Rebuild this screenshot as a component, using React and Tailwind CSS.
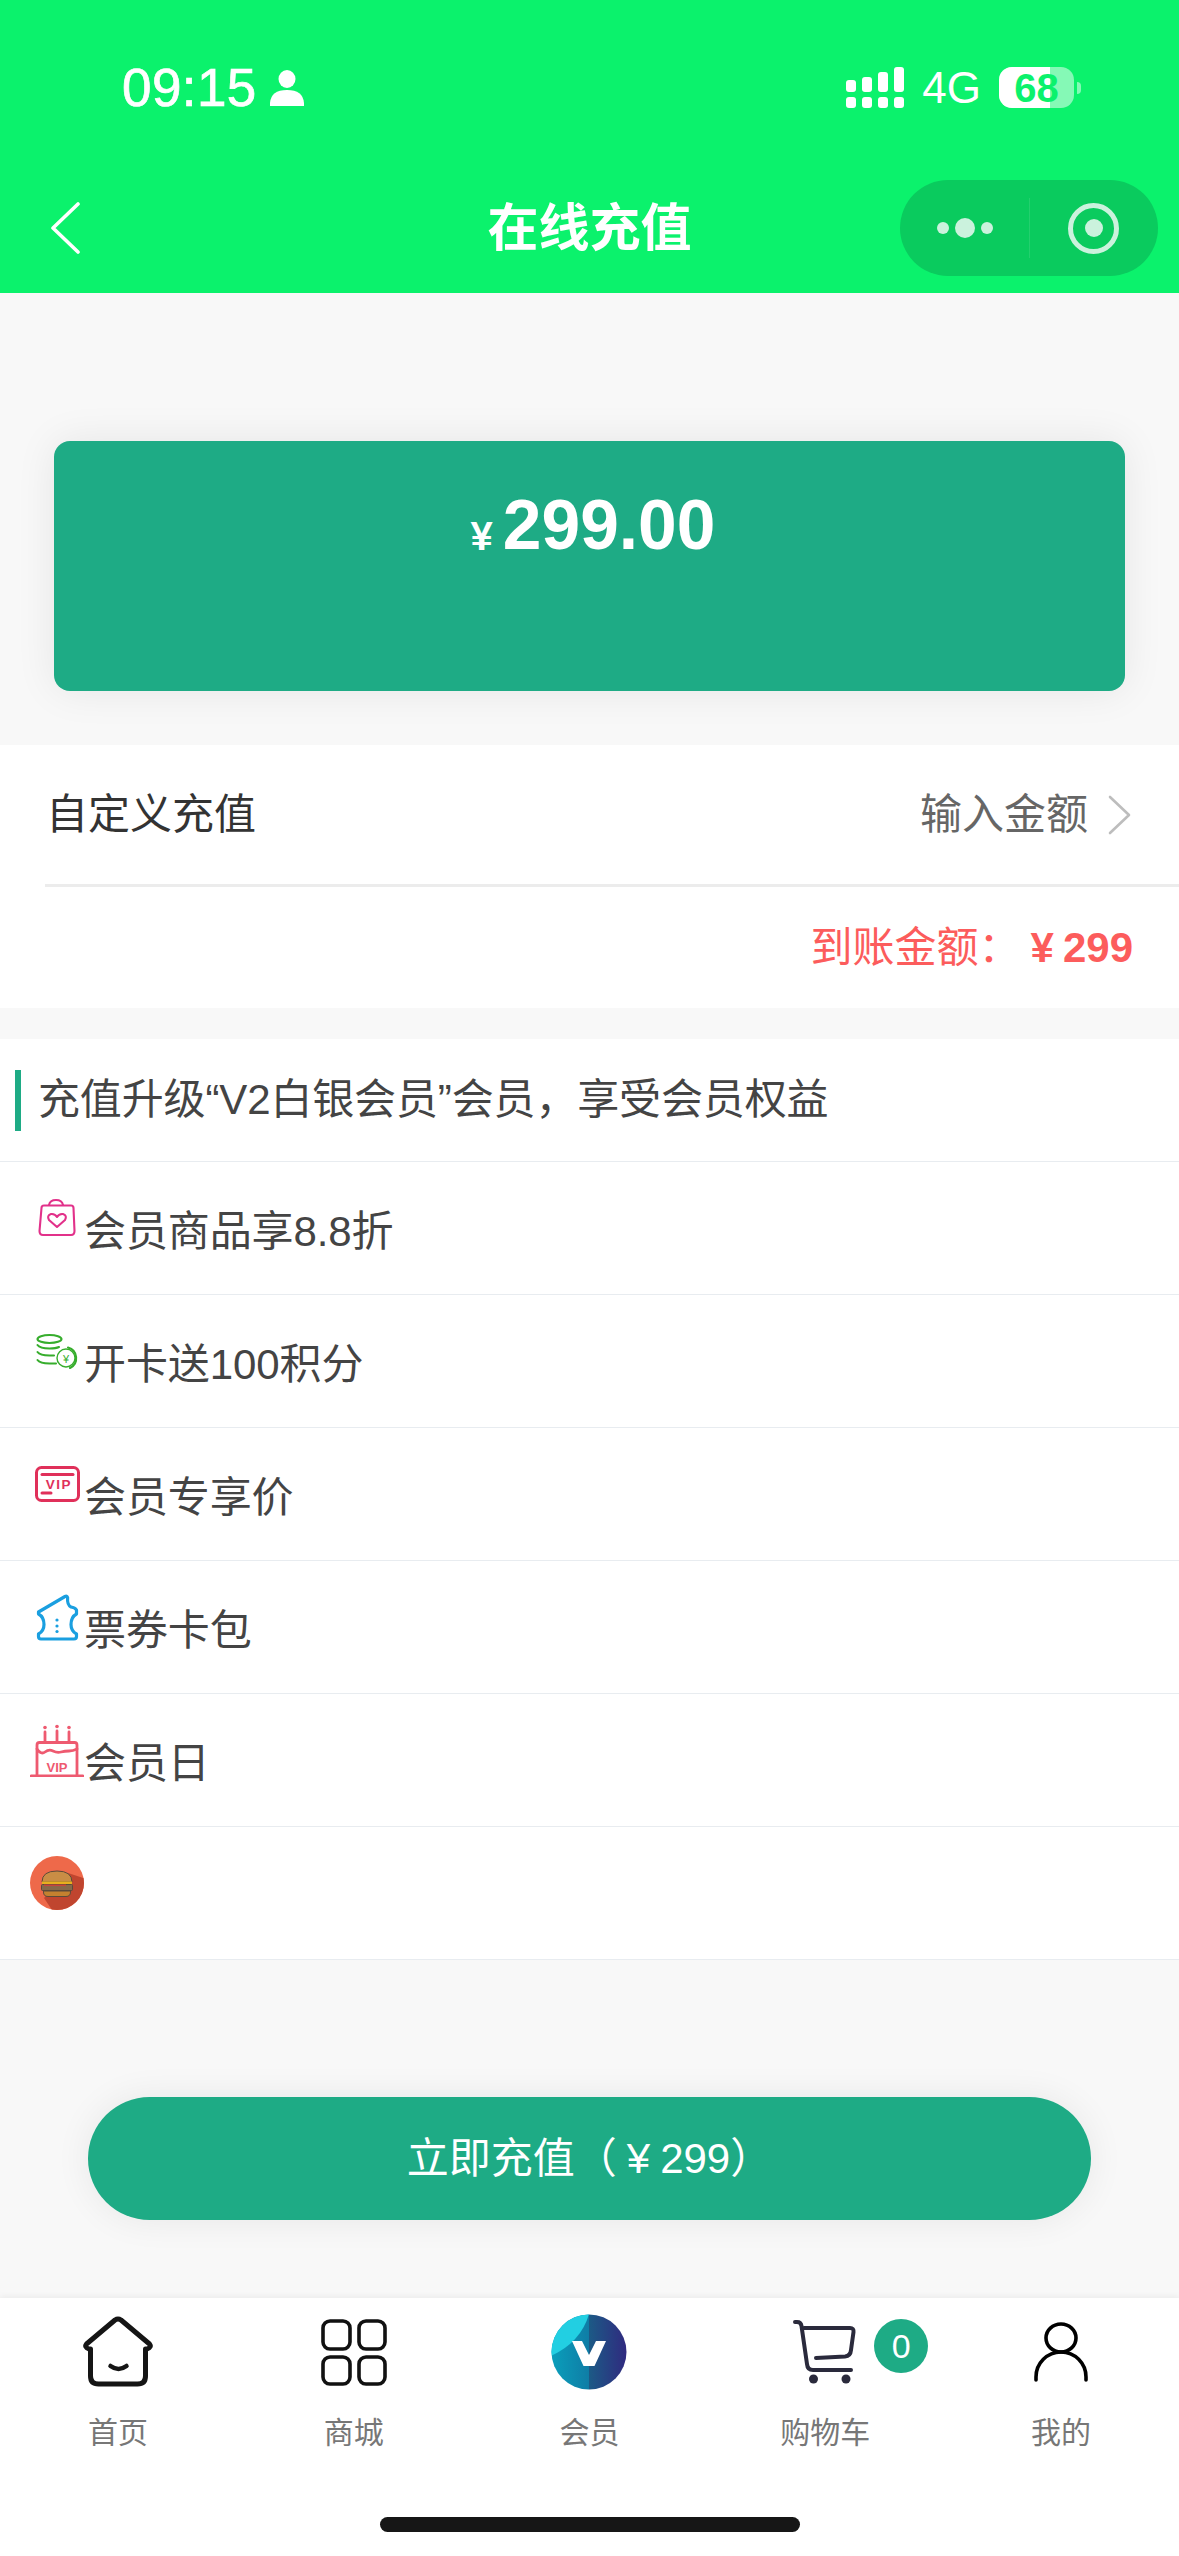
import React from "react";

function BagIcon() {
  return (
    <svg width="54" height="54" viewBox="0 0 54 54" fill="none" stroke="#e2318a" strokeWidth="2.1" strokeLinejoin="round" strokeLinecap="round">
      <path d="M11.5 17 Q11.5 14.5 14 14.5 H41 Q43.5 14.5 43.5 17 L44.5 40 Q44.5 44 41 44 H13 Q9.5 44 9.5 40 Z" />
      <path d="M19 14 Q20 9 26 9 Q32 9 33 14" />
      <path d="M27 36 L19 29 Q16.5 24.5 21 23 Q25 22.5 27 26 Q29 22.5 33 23 Q37.5 24.5 35 29 Z" />
    </svg>
  );
}

function CoinsIcon() {
  return (
    <svg width="54" height="54" viewBox="0 0 54 54" fill="none" stroke="#36ad2c" strokeWidth="2.1" strokeLinecap="round">
      <ellipse cx="19.5" cy="15" rx="12" ry="4" />
      <path d="M7.5 21 Q10 24.5 19.5 24.5 Q26 24.5 29 23" />
      <path d="M7.5 28 Q10 31.5 19.5 31.5 H24" />
      <path d="M7.5 36 Q10 39.5 19.5 39.5 H26" />
      <circle cx="36" cy="34" r="9" strokeWidth="1.4" />
      <path d="M38 23.5 A11 11 0 0 1 40 44" />
      <text x="36" y="38.5" textAnchor="middle" fontSize="11" fontFamily="Liberation Sans" fill="#36ad2c" stroke="none">¥</text>
    </svg>
  );
}

function VipIcon() {
  return (
    <svg width="54" height="54" viewBox="0 0 54 54" fill="none" stroke="#e0305a" strokeWidth="3" strokeLinecap="round">
      <rect x="6.5" y="10.5" width="42" height="33" rx="5" />
      <path d="M12 17.5 H43" />
      <path d="M12 36 H21" />
      <text x="29" y="32" textAnchor="middle" fontSize="13.5" fontWeight="700" letterSpacing="1.5" fontFamily="Liberation Sans" fill="#e0305a" stroke="none">VIP</text>
    </svg>
  );
}

function TicketIcon() {
  return (
    <svg width="54" height="54" viewBox="0 0 54 54" fill="none" stroke="#1a9fe0" strokeWidth="3.2" strokeLinejoin="round">
      <path d="M8.5 22 L35 6.5 Q36.8 5.6 37.6 7.5 Q37 15 41 17 Q45 17.5 46.5 20 V24 Q41 27 41 34.5 Q41 41 46.5 44 V46.5 Q46.5 49 44 49 H11 Q8.5 49 8.5 46.5 V44 Q14 41 14 34.5 Q14 27 8.5 24 Z" />
      <circle cx="27" cy="30" r="1.6" fill="#1a9fe0" stroke="none" />
      <circle cx="27" cy="36" r="1.6" fill="#1a9fe0" stroke="none" />
      <circle cx="27" cy="41.5" r="1.6" fill="#1a9fe0" stroke="none" />
    </svg>
  );
}

function CakeIcon() {
  return (
    <svg width="54" height="54" viewBox="0 0 54 54" fill="none" stroke="#ee5a70" strokeWidth="2.8" strokeLinecap="round" strokeLinejoin="round">
      <path d="M1 53 H53" />
      <path d="M7 53 V22 Q7 19.5 9.5 19.5 H44.5 Q47 19.5 47 22 V53" />
      <path d="M7 26 Q11 32 15 29 T23 28 T31 29 T39 28 T47 26" />
      <path d="M15 9 V19 M27 8 V19 M39 9 V19" />
      <circle cx="15" cy="4.5" r="1.8" fill="#ee5a70" stroke="none" />
      <circle cx="27" cy="3.5" r="1.8" fill="#ee5a70" stroke="none" />
      <circle cx="39" cy="4.5" r="1.8" fill="#ee5a70" stroke="none" />
      <text x="27" y="49" textAnchor="middle" fontSize="13" fontWeight="700" fontFamily="Liberation Sans" fill="#ee5a70" stroke="none">VIP</text>
    </svg>
  );
}

function BurgerIcon() {
  return (
    <svg width="54" height="54" viewBox="0 0 54 54">
      <defs>
        <clipPath id="burgerClip"><circle cx="27" cy="27" r="27" /></clipPath>
      </defs>
      <circle cx="27" cy="27" r="27" fill="#ee694a" />
      <polygon points="38,17 56,23 56,60 26,60 14,42" fill="#c0452f" clipPath="url(#burgerClip)" />
      <path d="M12 26 Q12 15 27 15 Q42 15 42 26 Z" fill="#c98d45" stroke="#5c4a3a" strokeWidth="1" />
      <rect x="12" y="25.5" width="30" height="3" fill="#e6b01e" />
      <rect x="11.5" y="28.5" width="31" height="6" rx="1" fill="#86694a" stroke="#5c4a3a" strokeWidth="1" />
      <rect x="14" y="28.5" width="22" height="1.6" fill="#c7453c" />
      <path d="M13.5 35 H40.5 V36 Q40.5 40.5 36 40.5 H18 Q13.5 40.5 13.5 36 Z" fill="#c4812f" stroke="#5c4a3a" strokeWidth="1" />
    </svg>
  );
}

function HomeIcon() {
  return (
    <svg width="72" height="72" viewBox="0 0 72 72" fill="none" stroke="#151515" strokeWidth="5" strokeLinecap="round" strokeLinejoin="round">
      <path d="M8.5 33 H7 Q2 31 4.5 28 L33 4 Q36 2 39 4 L67.5 28 Q70 31 65 33 H63.5 V60 Q63.5 68 55.5 68 H16.5 Q8.5 68 8.5 60 V33" />
      <path d="M28.5 50 Q36.5 56 44.5 50" strokeWidth="4.5" />
    </svg>
  );
}

function GridIcon() {
  return (
    <svg width="66" height="67" viewBox="0 0 66 67" fill="none" stroke="#111" strokeWidth="3.6">
      <rect x="2" y="2" width="27" height="28" rx="7" />
      <rect x="38" y="2" width="26" height="28" rx="7" />
      <rect x="2" y="38" width="27" height="27" rx="7" />
      <rect x="38" y="38" width="26" height="27" rx="7" />
    </svg>
  );
}

function VLogo() {
  return (
    <svg width="76" height="76" viewBox="0 0 76 76">
      <defs>
        <linearGradient id="vLeft" x1="0" y1="0" x2="1" y2="0">
          <stop offset="0" stopColor="#0a9fbb" />
          <stop offset="1" stopColor="#0f7da6" />
        </linearGradient>
        <linearGradient id="vRight" x1="0" y1="0" x2="1" y2="0">
          <stop offset="0" stopColor="#1c5a86" />
          <stop offset="1" stopColor="#30297f" />
        </linearGradient>
        <clipPath id="vClip"><circle cx="38" cy="38" r="37.5" /></clipPath>
      </defs>
      <g clipPath="url(#vClip)">
        <rect x="0" y="0" width="38" height="76" fill="url(#vLeft)" />
        <rect x="38" y="0" width="38" height="76" fill="url(#vRight)" />
        <path d="M0 42 Q30 28 38 0 H0 Z" fill="#22cfe2" />
      </g>
      <polygon points="21,27 31,27 38,41 45,27 55,27 43.5,52 32.5,52" fill="#fff" />
    </svg>
  );
}

function CartIcon() {
  return (
    <svg width="64" height="64" viewBox="0 0 64 64" fill="none" stroke="#2a2a3c" strokeWidth="4" strokeLinecap="round" strokeLinejoin="round">
      <path d="M2 2 H4 Q8 2 8.5 6 L14 44 Q14.5 50 20 50 H58" />
      <path d="M11 8 H57 Q61 8 60.5 12 L58 30 Q57.5 36 52 36.5 L23 38" />
      <circle cx="20.5" cy="59" r="4.5" fill="#2a2a3c" stroke="none" />
      <circle cx="53" cy="59" r="4.5" fill="#2a2a3c" stroke="none" />
    </svg>
  );
}

function PersonIcon() {
  return (
    <svg width="54" height="60" viewBox="0 0 54 60" fill="none" stroke="#000" strokeWidth="3.6" strokeLinecap="round">
      <ellipse cx="27" cy="16" rx="15" ry="14" />
      <path d="M2 58 V55 A25 25 0 0 1 52 55 V58" />
    </svg>
  );
}

function Chevron({ color, width, height, dir, stroke }) {
  const d = dir === "left" ? `M${width - 2} 2 L3 ${height / 2} L${width - 2} ${height - 2}` : `M2 2 L${width - 3} ${height / 2} L2 ${height - 2}`;
  return (
    <svg width={width} height={height} viewBox={`0 0 ${width} ${height}`} fill="none" stroke={color} strokeWidth={stroke} strokeLinecap="round" strokeLinejoin="round">
      <path d={d} />
    </svg>
  );
}

function SignalBars() {
  const tops = [12, 15, 20, 25];
  return (
    <div className="flex items-end gap-[6px]">
      {tops.map((h, i) => (
        <div key={i} className="flex w-[10px] flex-col gap-[5px]">
          <div className="w-full rounded-[3px] bg-white" style={{ height: h }} />
          <div className="h-[11px] w-full rounded-[3px] bg-white" />
        </div>
      ))}
    </div>
  );
}

const perks = [
  { icon: <BagIcon />, label: "会员商品享8.8折" },
  { icon: <CoinsIcon />, label: "开卡送100积分" },
  { icon: <VipIcon />, label: "会员专享价" },
  { icon: <TicketIcon />, label: "票券卡包" },
  { icon: <CakeIcon />, label: "会员日" },
  { icon: <BurgerIcon />, label: "" },
];

const tabs = [
  { label: "首页", icon: <HomeIcon /> },
  { label: "商城", icon: <GridIcon /> },
  { label: "会员", icon: <VLogo /> },
  { label: "购物车", icon: <CartIcon />, badge: "0" },
  { label: "我的", icon: <PersonIcon /> },
];

export default function App() {
  return (
    <div className="flex h-[2556px] w-[1179px] flex-col overflow-hidden bg-[#f8f8f8] [font-family:'Liberation_Sans','Noto_Sans_CJK_SC',sans-serif]">
      <header className="h-[293px] shrink-0 bg-[#0bf26c] text-white">
        <div className="flex h-[180px] items-start justify-between pl-[122px] pr-[98px] pt-[67px]">
          <div className="flex h-[41px] items-center gap-[13px]">
            <span className="text-[53px] leading-none tracking-[0.4px] [-webkit-text-stroke:0.7px_white]">09:15</span>
            <svg width="34" height="36" viewBox="0 0 34 36" fill="#fff">
              <ellipse cx="17" cy="9" rx="8.5" ry="9" />
              <path d="M0 36 V33 Q1 20 17 20 Q33 20 34 33 V36 Z" />
            </svg>
          </div>
          <div className="flex h-[41px] items-center">
            <SignalBars />
            <span className="ml-[18px] text-[44px] leading-none">4G</span>
            <div className="relative ml-[18px] flex h-[41px] w-[75px] items-center justify-center overflow-hidden rounded-[13px] bg-white/50">
              <div className="absolute inset-y-0 left-0 w-[51px] bg-white" />
              <span className="relative text-[40px] font-bold leading-none text-[#0bf26c]">68</span>
            </div>
            <div className="ml-[3px] h-[12px] w-[4px] rounded-r-full bg-white/50" />
          </div>
        </div>
        <div className="grid h-[96px] grid-cols-[258px_auto_258px] items-center justify-between px-[21px]">
          <div className="pl-[29px]">
            <Chevron color="#fff" width={30} height={52} dir="left" stroke={3.6} />
          </div>
          <h1 className="text-[51px] font-bold leading-none">在线充值</h1>
          <div className="flex h-[96px] w-[258px] items-center rounded-full bg-[#0acb5e]">
            <div className="flex w-[129px] items-center justify-center gap-[6px] pl-[2px]">
              <div className="h-[12px] w-[12px] rounded-full bg-[#cbf2dd]" />
              <div className="h-[20px] w-[20px] rounded-full bg-[#cbf2dd]" />
              <div className="h-[12px] w-[12px] rounded-full bg-[#cbf2dd]" />
            </div>
            <div className="h-[60px] w-px bg-white/10" />
            <div className="flex flex-1 items-center justify-center">
              <div className="flex h-[51px] w-[51px] items-center justify-center rounded-full border-[5px] border-[#cbf2dd]">
                <div className="h-[18px] w-[18px] rounded-full bg-[#cbf2dd]" />
              </div>
            </div>
          </div>
        </div>
      </header>

      <div className="mx-[54px] mt-[148px] flex h-[250px] shrink-0 items-start justify-center rounded-[16px] bg-[#1eab85] pl-[7px] pt-[50px] text-white shadow-[0_0_40px_rgba(0,0,0,0.08)]">
        <span className="mr-[10px] mt-[25px] text-[40px] font-bold leading-none">¥</span>
        <span className="text-[69.5px] font-bold leading-none">299.00</span>
      </div>

      <section className="mt-[54px] shrink-0 bg-white">
        <div className="flex h-[139px] items-center justify-between pl-[46px] pr-[47px] text-[42px] leading-none">
          <span className="text-[#333]">自定义充值</span>
          <div className="flex items-center gap-[20px] text-[#666]">
            <span>输入金额</span>
            <Chevron color="#bdbdbd" width={24} height={40} dir="right" stroke={2.6} />
          </div>
        </div>
        <div className="ml-[45px] h-[3px] bg-[#ececec]" />
        <div className="flex h-[121px] items-center justify-end pr-[46px] text-[42px] leading-none text-[#fc5c5c]">
          <span>到账金额：</span>
          <span className="ml-[10px] mr-[9px] font-bold">¥</span>
          <span className="font-bold">299</span>
        </div>
      </section>

      <section className="mt-[31px] shrink-0 bg-white">
        <div className="flex h-[123px] items-center border-b-[1.5px] border-[#e8ecf0] pl-[15px]">
          <div className="h-[61px] w-[6px] bg-[#1eab85]" />
          <span className="ml-[17px] text-[42px] leading-none tracking-[-0.14px] text-[#444]">充值升级“V2白银会员”会员，享受会员权益</span>
        </div>
        {perks.map((p, i) => (
          <div key={i} className="flex h-[133px] items-start border-b-[1.5px] border-[#e8ecf0] pl-[30px] pt-[29px]">
            <div className="h-[54px] w-[54px] shrink-0">{p.icon}</div>
            {p.label && <span className="mt-[20px] text-[42px] leading-none tracking-[-0.1px] text-[#444]">{p.label}</span>}
          </div>
        ))}
      </section>

      <div className="mx-[88px] mt-[137px] flex h-[123px] shrink-0 items-center justify-center rounded-full bg-[#1eab85] text-[42px] leading-none text-white shadow-[0_0_36px_rgba(0,0,0,0.07)]">
        <span>立即充值（</span>
        <span className="mx-[10px]">¥</span>
        <span>299）</span>
      </div>

      <nav className="mt-auto h-[258px] shrink-0 bg-white shadow-[0_-2px_6px_rgba(0,0,0,0.05)]">
        <div className="grid h-[219px] grid-cols-5 pt-[16px]">
          {tabs.map((t) => (
            <div key={t.label} className="flex flex-col items-center">
              <div className="relative flex h-[76px] items-center justify-center">
                {t.icon}
                {t.badge && (
                  <span className="absolute left-[81px] top-[5px] flex h-[54px] w-[54px] items-center justify-center rounded-full bg-[#1eab85] text-[34px] leading-none text-white">
                    {t.badge}
                  </span>
                )}
              </div>
              <span className="mt-[28px] text-[30px] leading-none text-[#777]">{t.label}</span>
            </div>
          ))}
        </div>
        <div className="mx-auto h-[15px] w-[420px] rounded-full bg-[#161616]" />
      </nav>
    </div>
  );
}
